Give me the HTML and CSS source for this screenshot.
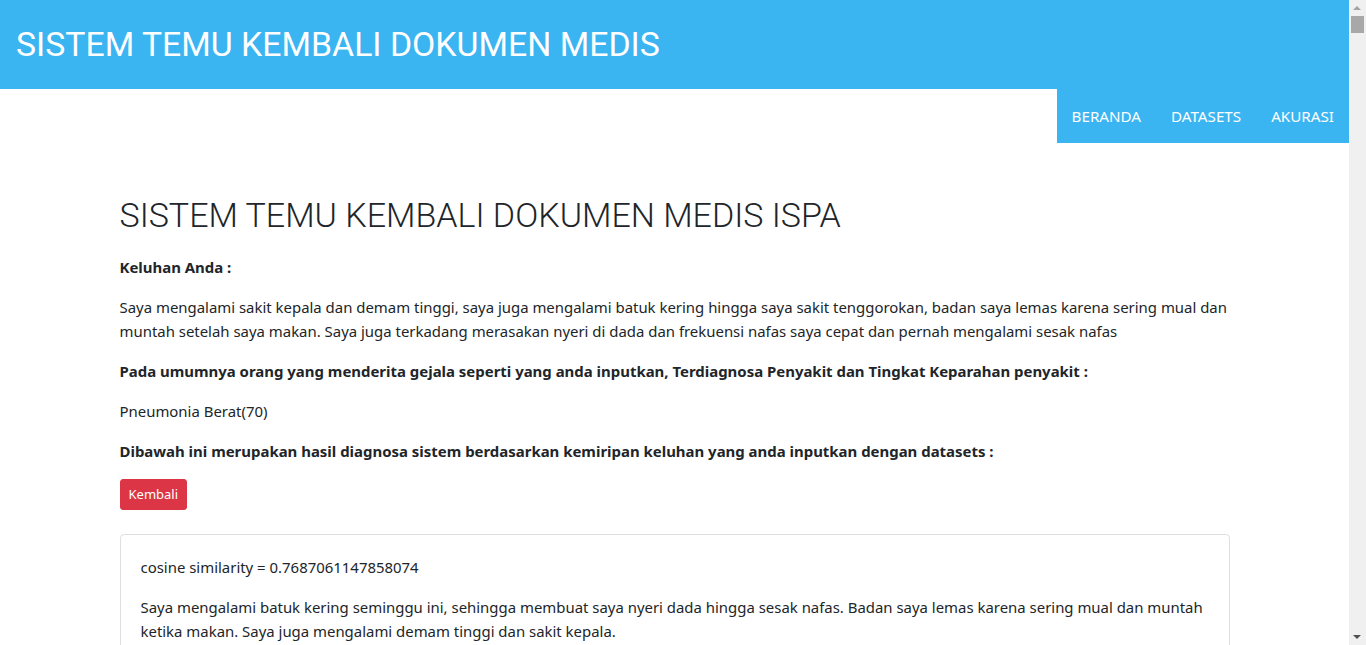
FILE: index.html
```html
<!DOCTYPE html>
<html lang="id">
<head>
<meta charset="utf-8">
<title>Sistem Temu Kembali Dokumen Medis</title>
<link rel="stylesheet" href="styles.css">
</head>
<body>
<div class="page">
  <header class="topbar">
    <div class="brand">SISTEM TEMU KEMBALI DOKUMEN MEDIS</div>
  </header>
  <nav class="navrow">
    <ul class="menu">
      <li><a href="#">BERANDA</a></li>
      <li><a href="#">DATASETS</a></li>
      <li><a href="#">AKURASI</a></li>
    </ul>
  </nav>
  <main class="container">
    <h2 class="title">SISTEM TEMU KEMBALI DOKUMEN MEDIS ISPA</h2>
    <p class="strong">Keluhan Anda :</p>
    <p>Saya mengalami sakit kepala dan demam tinggi, saya juga mengalami batuk kering hingga saya sakit tenggorokan, badan saya lemas karena sering mual dan muntah setelah saya makan. Saya juga terkadang merasakan nyeri di dada dan frekuensi nafas saya cepat dan pernah mengalami sesak nafas</p>
    <p class="strong">Pada umumnya orang yang menderita gejala seperti yang anda inputkan, Terdiagnosa Penyakit dan Tingkat Keparahan penyakit :</p>
    <p>Pneumonia Berat(70)</p>
    <p class="strong">Dibawah ini merupakan hasil diagnosa sistem berdasarkan kemiripan keluhan yang anda inputkan dengan datasets :</p>
    <div class="actions"><a class="btn-danger" href="#">Kembali</a></div>
    <div class="card">
      <p>cosine similarity = 0.7687061147858074</p>
      <p>Saya mengalami batuk kering seminggu ini, sehingga membuat saya nyeri dada hingga sesak nafas. Badan saya lemas karena sering mual dan muntah ketika makan. Saya juga mengalami demam tinggi dan sakit kepala.</p>
      <p class="strong">Diagnosa : Pneumonia Berat</p>
    </div>
    <div class="card">
      <p>cosine similarity = 0.6512843970215538</p>
      <p>Saya demam tinggi dan batuk disertai dahak sejak beberapa hari, nafas saya cepat dan terasa sesak.</p>
      <p class="strong">Diagnosa : Pneumonia</p>
    </div>
  </main>
</div>
<div class="fake-scrollbar" aria-hidden="true">
  <span class="sb-up"></span>
  <span class="sb-thumb"></span>
  <span class="sb-down"></span>
</div>
</body>
</html>
```
FILE: styles.css
```css
html, body { margin: 0; padding: 0; }
body {
  font-family: "Noto Sans", "Open Sans", sans-serif;
  font-size: 14.93px;
  line-height: 24px;
  color: #212529;
  background: #fff;
}
.page { margin-right: 17px; }

.topbar {
  height: 89px;
  background: #3bb4f2;
  display: flex;
  align-items: center;
  padding-left: 16px;
}
.brand {
  font-family: Roboto, sans-serif;
  font-size: 33.8px;
  font-weight: 400;
  color: #fff;
  line-height: 40px;
}

.navrow { display: flex; justify-content: flex-end; }
.menu {
  list-style: none;
  margin: 0;
  padding: 0;
  display: flex;
  background: #3bb4f2;
  height: 54px;
}
.menu li { display: flex; }
.menu a {
  display: flex;
  align-items: center;
  padding: 0 15px;
  color: #fff;
  text-decoration: none;
  font-size: 15.2px;
}

.container {
  width: 1110px;
  margin: 0 auto;
  padding-top: 53px;
  padding-bottom: 40px;
}
.title {
  font-family: Roboto, sans-serif;
  font-weight: 300;
  font-size: 34px;
  line-height: 38px;
  margin: 0 0 21px;
  color: #212529;
}
p { margin: 0 0 16px; }
.strong { font-weight: 700; font-size: 14.95px; }

.actions { margin-bottom: 24px; }
.btn-danger {
  display: inline-block;
  background: #dc3545;
  color: #fff;
  text-decoration: none;
  font-size: 13px;
  line-height: 21px;
  padding: 4px 8px;
  border-radius: 3px;
  border: 1px solid #dc3545;
}

.card {
  border: 1px solid rgba(0,0,0,.125);
  border-radius: 4px;
  padding: 20px 20px 4px;
  margin-bottom: 24px;
}

.fake-scrollbar {
  position: fixed;
  top: 0;
  right: 0;
  width: 17px;
  height: 100%;
  background: #f0f0f0;
}
.sb-up, .sb-down {
  position: absolute;
  left: 4px;
  width: 0;
  height: 0;
  border-left: 4px solid transparent;
  border-right: 4px solid transparent;
}
.sb-up { top: 6px; border-bottom: 4px solid #a3a3a3; }
.sb-down { bottom: 6px; border-top: 4px solid #505050; }
.sb-thumb {
  position: absolute;
  top: 16px;
  left: 2px;
  width: 13px;
  height: 17px;
  background: #a8a8a8;
}
```
